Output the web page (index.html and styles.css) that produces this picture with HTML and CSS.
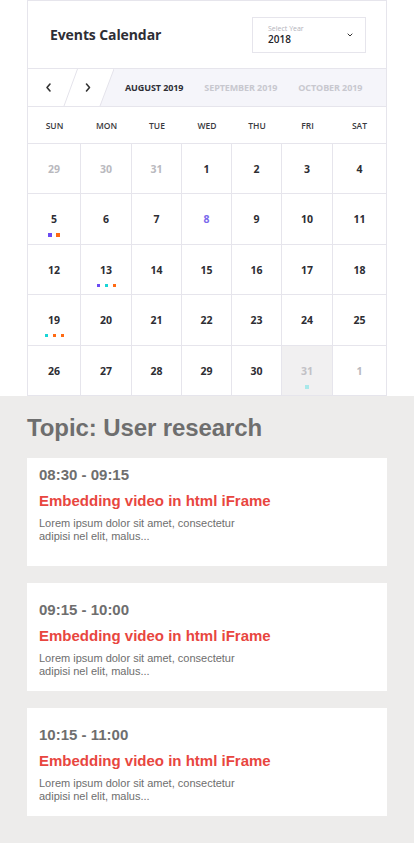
FILE: index.html
```html
<!DOCTYPE html>
<html lang="en">
<head>
<meta charset="utf-8">
<title>Events Calendar</title>
<link rel="stylesheet" href="styles.css">
</head>
<body>
<div class="calendar">
  <div class="cal-header">
    <h1 class="cal-title">Events Calendar</h1>
    <div class="year-select">
      <div class="year-text">
        <span class="year-label">Select Year</span>
        <span class="year-value">2018</span>
      </div>
      <svg class="year-chevron" width="6" height="4" viewBox="0 0 6 4"><polyline points="0.7,0.7 3,3 5.3,0.7" fill="none" stroke="#333" stroke-width="1"/></svg>
    </div>
  </div>
  <div class="cal-nav">
    <svg class="nav-arrows" width="86" height="37" viewBox="0 0 86 37">
      <polygon points="72,37 86,0 86,37" fill="#f5f5fa"/>
      <line x1="36" y1="37" x2="49.5" y2="0" stroke="#e4e3eb" stroke-width="1"/>
      <line x1="72" y1="37" x2="86" y2="0" stroke="#e4e3eb" stroke-width="1"/>
      <polyline points="22,15 19,18.5 22,22" fill="none" stroke="#333" stroke-width="1.6" stroke-linecap="round" stroke-linejoin="round"/>
      <polyline points="58.5,15 61.5,18.5 58.5,22" fill="none" stroke="#333" stroke-width="1.6" stroke-linecap="round" stroke-linejoin="round"/>
    </svg>
    <div class="months">
      <span class="month active">August 2019</span>
      <span class="month">September 2019</span>
      <span class="month">October 2019</span>
    </div>
  </div>
  <div class="weekdays">
    <span>Sun</span><span>Mon</span><span>Tue</span><span>Wed</span><span>Thu</span><span>Fri</span><span>Sat</span>
  </div>
  <div class="days">
    <div class="day muted"><span class="num">29</span></div>
    <div class="day muted"><span class="num">30</span></div>
    <div class="day muted"><span class="num">31</span></div>
    <div class="day"><span class="num">1</span></div>
    <div class="day"><span class="num">2</span></div>
    <div class="day"><span class="num">3</span></div>
    <div class="day"><span class="num">4</span></div>

    <div class="day"><span class="num">5</span><span class="dots big"><i class="dot purple"></i><i class="dot orange"></i></span></div>
    <div class="day"><span class="num">6</span></div>
    <div class="day"><span class="num">7</span></div>
    <div class="day today"><span class="num">8</span></div>
    <div class="day"><span class="num">9</span></div>
    <div class="day"><span class="num">10</span></div>
    <div class="day"><span class="num">11</span></div>

    <div class="day"><span class="num">12</span></div>
    <div class="day"><span class="num">13</span><span class="dots"><i class="dot purple"></i><i class="dot cyan"></i><i class="dot orange"></i></span></div>
    <div class="day"><span class="num">14</span></div>
    <div class="day"><span class="num">15</span></div>
    <div class="day"><span class="num">16</span></div>
    <div class="day"><span class="num">17</span></div>
    <div class="day"><span class="num">18</span></div>

    <div class="day"><span class="num">19</span><span class="dots"><i class="dot cyan"></i><i class="dot orange"></i><i class="dot orange"></i></span></div>
    <div class="day"><span class="num">20</span></div>
    <div class="day"><span class="num">21</span></div>
    <div class="day"><span class="num">22</span></div>
    <div class="day"><span class="num">23</span></div>
    <div class="day"><span class="num">24</span></div>
    <div class="day"><span class="num">25</span></div>

    <div class="day"><span class="num">26</span></div>
    <div class="day"><span class="num">27</span></div>
    <div class="day"><span class="num">28</span></div>
    <div class="day"><span class="num">29</span></div>
    <div class="day"><span class="num">30</span></div>
    <div class="day selected"><span class="num">31</span><span class="dots big"><i class="dot light-cyan"></i></span></div>
    <div class="day muted"><span class="num">1</span></div>
  </div>
</div>

<section class="topic">
  <h2 class="topic-title">Topic: User research</h2>
  <div class="sessions">
    <article class="session first">
      <div class="session-time">08:30 - 09:15</div>
      <div class="session-title">Embedding video in html iFrame</div>
      <p class="session-desc">Lorem ipsum dolor sit amet, consectetur<br>adipisi nel elit, malus...</p>
    </article>
    <article class="session">
      <div class="session-time">09:15 - 10:00</div>
      <div class="session-title">Embedding video in html iFrame</div>
      <p class="session-desc">Lorem ipsum dolor sit amet, consectetur<br>adipisi nel elit, malus...</p>
    </article>
    <article class="session">
      <div class="session-time">10:15 - 11:00</div>
      <div class="session-title">Embedding video in html iFrame</div>
      <p class="session-desc">Lorem ipsum dolor sit amet, consectetur<br>adipisi nel elit, malus...</p>
    </article>
  </div>
</section>
</body>
</html>
```

FILE: styles.css
```css
* { box-sizing: border-box; }

html, body {
  margin: 0;
  padding: 0;
  background: #ffffff;
}

body {
  font-family: "Open Sans", "Liberation Sans", sans-serif;
  color: #2d2d33;
}

.calendar {
  margin: 0 27px;
  width: 360px;
  border: 1px solid #e6e5ec;
  border-bottom: none;
  background: #ffffff;
}

/* header */
.cal-header {
  height: 68px;
  display: flex;
  align-items: center;
  justify-content: space-between;
  padding: 0 20px 0 22px;
  border-bottom: 1px solid #e6e5ec;
}

.cal-title {
  margin: 0;
  font-size: 14px;
  font-weight: 700;
  color: #2e2e35;
  letter-spacing: -0.1px;
  line-height: 18px;
}

.year-select {
  width: 114px;
  height: 36px;
  border: 1px solid #e6e5ec;
  display: flex;
  align-items: center;
  justify-content: space-between;
  padding: 0 12px 0 15px;
}

.year-text {
  display: flex;
  flex-direction: column;
}

.year-label {
  font-size: 7px;
  line-height: 9px;
  color: #b3b3bb;
  font-weight: 400;
}

.year-value {
  font-size: 10px;
  line-height: 13px;
  font-weight: 600;
  color: #222228;
}

.year-chevron { display: block; }

/* nav */
.cal-nav {
  height: 38px;
  display: flex;
  border-bottom: 1px solid #e6e5ec;
}

.nav-arrows {
  display: block;
  flex: none;
}

.months {
  flex: 1;
  background: #f5f5fa;
  display: flex;
  align-items: center;
  gap: 21px;
  padding-left: 11px;
}

.month {
  font-size: 9px;
  font-weight: 700;
  text-transform: uppercase;
  color: #c8c8cf;
  letter-spacing: -0.1px;
  white-space: nowrap;
}

.month.active { color: #2e2e35; }

/* weekdays */
.weekdays {
  display: grid;
  grid-template-columns: 53px 51px 50px 50px 50px 51px 53px;
  height: 37px;
  align-items: center;
  border-bottom: 1px solid #e6e5ec;
}

.weekdays span {
  text-align: center;
  font-size: 8.5px;
  font-weight: 600;
  text-transform: uppercase;
  color: #3a3a40;
}

/* days */
.days {
  display: grid;
  grid-template-columns: 53px 51px 50px 50px 50px 51px 53px;
  grid-auto-rows: 50.4px;
}

.day {
  border-right: 1px solid #e6e5ec;
  border-bottom: 1px solid #e6e5ec;
  display: flex;
  flex-direction: column;
  align-items: center;
  padding-top: 19px;
}

.day:nth-child(7n) { border-right: none; }

.num {
  font-size: 10.5px;
  line-height: 12px;
  font-weight: 700;
  color: #2d2d33;
}

.day.muted .num { color: #b9b9be; }
.day.today .num { color: #7b69ec; }
.day.selected { background: #f1f0f1; }
.day.selected .num { color: #c2c1c6; }

.dots {
  display: flex;
  gap: 5px;
  margin-top: 8px;
}

.dots.big { gap: 4px; }

.dot {
  display: block;
  width: 3px;
  height: 3px;
}

.dots.big .dot {
  width: 4px;
  height: 4px;
}

.dot.purple { background: #6b4cf2; }
.dot.orange { background: #ff6a13; }
.dot.cyan { background: #19d5d6; }
.dot.light-cyan { background: #a9e8ea; }

/* topic section */
.topic {
  background: #edeceb;
  padding: 18px 27px 27px;
  font-family: "Liberation Sans", Arial, sans-serif;
}

.topic-title {
  margin: 0 0 16px;
  font-size: 24px;
  line-height: 28px;
  font-weight: 700;
  color: #6e6e6e;
  letter-spacing: -0.1px;
}

.sessions {
  display: flex;
  flex-direction: column;
  gap: 17px;
}

.session {
  background: #ffffff;
  height: 108px;
  padding: 18px 12px 0;
}

.session.first { padding-top: 8px; }

.session-time {
  font-size: 15px;
  line-height: 18px;
  font-weight: 700;
  color: #6e6e6e;
}

.session-title {
  margin-top: 7px;
  font-size: 15px;
  line-height: 20px;
  font-weight: 700;
  color: #e8463f;
}

.session-desc {
  margin: 6px 0 0;
  font-size: 11px;
  line-height: 13px;
  color: #6e6e6e;
}
```
